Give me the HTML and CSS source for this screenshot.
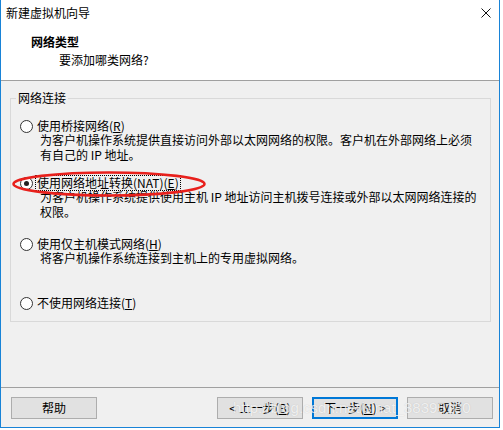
FILE: index.html
```html
<!DOCTYPE html>
<html lang="zh-CN">
<head>
<meta charset="utf-8">
<title>新建虚拟机向导</title>
<link rel="stylesheet" href="styles.css">
</head>
<body>
<div class="window">
  <div class="titlebar">
    <span class="title">新建虚拟机向导</span>
    <svg class="close" width="10" height="10" viewBox="0 0 10 10"><path d="M0.5 0.5L9.5 9.5M9.5 0.5L0.5 9.5" stroke="#111" stroke-width="1" fill="none"/></svg>
  </div>
  <div class="header">
    <div class="h-title">网络类型</div>
    <div class="h-sub">要添加哪类网络?</div>
  </div>
  <div class="body">
    <fieldset class="group">
      <legend class="legend">网络连接</legend>
      <div class="opt">
        <div class="opt-row"><span class="radio"></span><span class="opt-label">使用桥接网络(<u>R</u>)</span></div>
        <div class="desc">为客户机操作系统提供直接访问外部以太网网络的权限。客户机在外部网络上必须<br>有自己的 IP 地址。</div>
      </div>
      <div class="opt opt-nat">
        <div class="opt-row"><span class="radio checked"></span><span class="opt-label focus">使用网络地址转换(NAT)(<u>E</u>)</span></div>
        <div class="desc">为客户机操作系统提供使用主机 IP 地址访问主机拨号连接或外部以太网网络连接的<br>权限。</div>
      </div>
      <div class="opt opt-host">
        <div class="opt-row"><span class="radio"></span><span class="opt-label">使用仅主机模式网络(<u>H</u>)</span></div>
        <div class="desc">将客户机操作系统连接到主机上的专用虚拟网络。</div>
      </div>
      <div class="opt opt-none">
        <div class="opt-row"><span class="radio"></span><span class="opt-label">不使用网络连接(<u>T</u>)</span></div>
      </div>
    </fieldset>
  </div>
  <div class="footer">
    <button class="btn">帮助</button>
    <div class="spacer"></div>
    <button class="btn">&lt; 上一步(<u>B</u>)</button>
    <button class="btn btn-default">下一步(<u>N</u>) &gt;</button>
    <button class="btn">取消</button>
  </div>
  <svg class="ellipse" width="196" height="28" viewBox="0 0 196 28"><ellipse cx="98" cy="14" rx="95.5" ry="11.5" fill="none" stroke="#e8201c" stroke-width="2.6"/></svg>
  <div class="watermark">http://blog.csdn.net/sinat_38395180</div>
</div>
</body>
</html>
```
FILE: styles.css
```css
html, body {
  margin: 0;
  padding: 0;
  background: #ffffff;
}
body {
  font-family: "Noto Sans CJK SC", "Microsoft YaHei", sans-serif;
  font-size: 12px;
  color: #000;
}
.window {
  position: relative;
  width: 500px;
  height: 428px;
  box-sizing: border-box;
  border: 1px solid #1883d7;
  border-top: none;
  background: #f0f0f0;
  display: flex;
  flex-direction: column;
  overflow: hidden;
}
.titlebar {
  height: 27px;
  background: #fff;
  display: flex;
  align-items: flex-start;
  justify-content: space-between;
  padding: 5px 8px 0 5px;
  box-sizing: border-box;
}
.title {
  line-height: 16px;
  font-size: 12px;
}
.close {
  margin-top: 3px;
}
.header {
  height: 54px;
  background: #fff;
  box-sizing: border-box;
  padding-top: 6px;
  border-bottom: 1px solid #a0a0a0;
  line-height: 18px;
}
.h-title {
  padding-left: 30px;
  font-weight: bold;
}
.h-sub {
  padding-left: 58px;
}
.body {
  flex: 1;
  padding: 9px 8px 0 9px;
  box-sizing: border-box;
  border-bottom: 1px solid #a0a0a0;
}
.group {
  margin: 0;
  padding: 13px 9px 11px 9px;
  border: 1px solid #d9d9d9;
  min-width: 0;
}
.legend {
  padding: 0 2px;
  margin-left: -4px;
  line-height: 16px;
}
.opt-row {
  display: flex;
  align-items: center;
  height: 14px;
  line-height: 14px;
}
.radio {
  width: 11px;
  height: 11px;
  border: 1px solid #333;
  border-radius: 50%;
  background: #fff;
  box-sizing: content-box;
  margin-right: 2px;
  position: relative;
  flex: none;
}
.radio.checked::after {
  content: "";
  position: absolute;
  left: 3px;
  top: 3px;
  width: 5px;
  height: 5px;
  border-radius: 50%;
  background: #222;
}
.opt-label {
  padding: 0 1px;
  border: 1px dotted transparent;
  white-space: nowrap;
}
.opt-label.focus {
  border-color: #000;
}
.desc {
  margin-top: -1px;
  padding-left: 20px;
  line-height: 15px;
  white-space: nowrap;
}
.opt-nat { margin-top: 14px; }
.opt-host { margin-top: 18px; }
.opt-none { margin-top: 31px; }
.footer {
  height: 39px;
  box-sizing: border-box;
  padding: 9px 6px 0 10px;
  display: flex;
  gap: 9px;
}
.spacer { flex: 1; }
.btn {
  width: 86px;
  height: 22px;
  box-sizing: border-box;
  background: #e1e1e1;
  border: 1px solid #adadad;
  font-family: inherit;
  font-size: 12px;
  color: #000;
  padding: 0;
  line-height: 18px;
}
.btn-default {
  border: 2px solid #0078d7;
}
.ellipse {
  position: absolute;
  left: 10px;
  top: 170px;
}
.watermark {
  position: absolute;
  left: 232px;
  top: 399px;
  font-family: "Liberation Sans", Arial, sans-serif;
  font-size: 15px;
  color: rgba(255, 255, 255, 0.75);
  text-shadow: 0 0 1px rgba(120, 120, 120, 0.35);
  white-space: nowrap;
  pointer-events: none;
}
```
